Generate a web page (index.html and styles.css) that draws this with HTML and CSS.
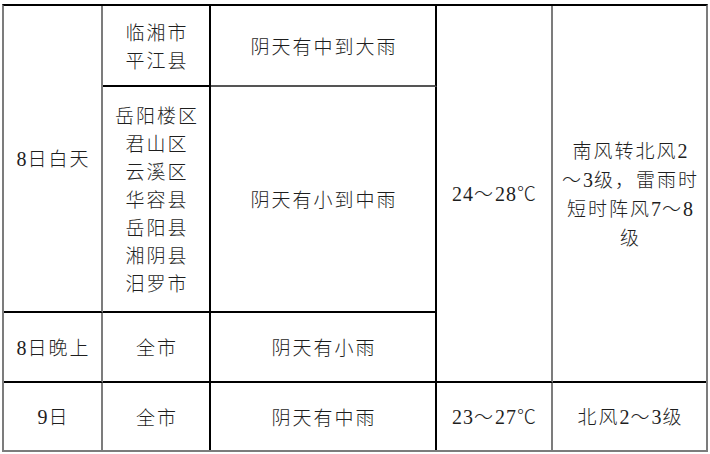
FILE: index.html
```html
<!DOCTYPE html>
<html lang="zh-CN">
<head>
<meta charset="utf-8">
<title>天气预报</title>
<link rel="stylesheet" href="styles.css">
</head>
<body>
<div class="forecast">
  <div class="cell c1 r12 gray-right"><p class="txt"><span class="num">8</span>日白天</p></div>
  <div class="cell c2 r1"><p class="txt">临湘市<br>平江县</p></div>
  <div class="cell c3 r1 thin-bottom"><p class="txt">阴天有中到大雨</p></div>
  <div class="cell c4 r123 gray-right"><p class="txt"><span class="num">24</span>～<span class="num">28</span>℃</p></div>
  <div class="cell c5 r123 last-col"><p class="txt">南风转北风<span class="num">2</span><br>～<span class="num">3</span>级，雷雨时<br>短时阵风<span class="num">7</span>～<span class="num">8</span><br>级</p></div>
  <div class="cell c2 r2"><p class="txt">岳阳楼区<br>君山区<br>云溪区<br>华容县<br>岳阳县<br>湘阴县<br>汨罗市</p></div>
  <div class="cell c3 r2"><p class="txt">阴天有小到中雨</p></div>
  <div class="cell c1 r3 gray-right"><p class="txt"><span class="num">8</span>日晚上</p></div>
  <div class="cell c2 r3"><p class="txt">全市</p></div>
  <div class="cell c3 r3"><p class="txt">阴天有小雨</p></div>
  <div class="cell c1 r4 gray-right last-row"><p class="txt"><span class="num">9</span>日</p></div>
  <div class="cell c2 r4 last-row"><p class="txt">全市</p></div>
  <div class="cell c3 r4 last-row"><p class="txt">阴天有中雨</p></div>
  <div class="cell c4 r4 last-row gray-right"><p class="txt"><span class="num">23</span>～<span class="num">27</span>℃</p></div>
  <div class="cell c5 r4 last-row last-col"><p class="txt">北风<span class="num">2</span>～<span class="num">3</span>级</p></div>
</div>
</body>
</html>
```

FILE: styles.css
```css
html, body {
  margin: 0;
  padding: 0;
  background: #ffffff;
}

body {
  padding: 4px 0 0 2px;
}

.forecast {
  display: grid;
  grid-template-columns: 99px 108px 226px 116px 153px;
  grid-template-rows: 81px 226px 70px 67px;
  width: 702px;
  border-top: 2px solid #000000;
  border-left: 2px solid #7c7c7c;
  border-right: 2px solid #7c7c7c;
  border-bottom: 2px solid #7c7c7c;
  font-family: "Noto Sans CJK SC", sans-serif;
  font-size: 19px;
  font-weight: 300;
  letter-spacing: 2px;
  line-height: 28px;
  color: #1e1e1e;
}

.num {
  font-family: "Liberation Serif", "Times New Roman", serif;
  font-weight: 400;
  font-size: 20px;
  letter-spacing: 1px;
}

.cell {
  box-sizing: border-box;
  display: flex;
  align-items: center;
  justify-content: center;
  border-right: 2px solid #000000;
  border-bottom: 2px solid #000000;
  padding-left: 2px;
}

.txt {
  margin: 0;
  text-align: center;
}

.gray-right { border-right-color: #7c7c7c; }
.thin-bottom { border-bottom-color: #555555; }
.last-col { border-right: none; }
.last-row { border-bottom: none; }

.c1 { grid-column: 1; }
.c2 { grid-column: 2; }
.c3 { grid-column: 3; }
.c4 { grid-column: 4; }
.c5 { grid-column: 5; }

.r1 { grid-row: 1; }
.r2 { grid-row: 2; }
.r3 { grid-row: 3; }
.r4 { grid-row: 4; }
.r12 { grid-row: 1 / span 2; }
.r123 { grid-row: 1 / span 3; }
```
